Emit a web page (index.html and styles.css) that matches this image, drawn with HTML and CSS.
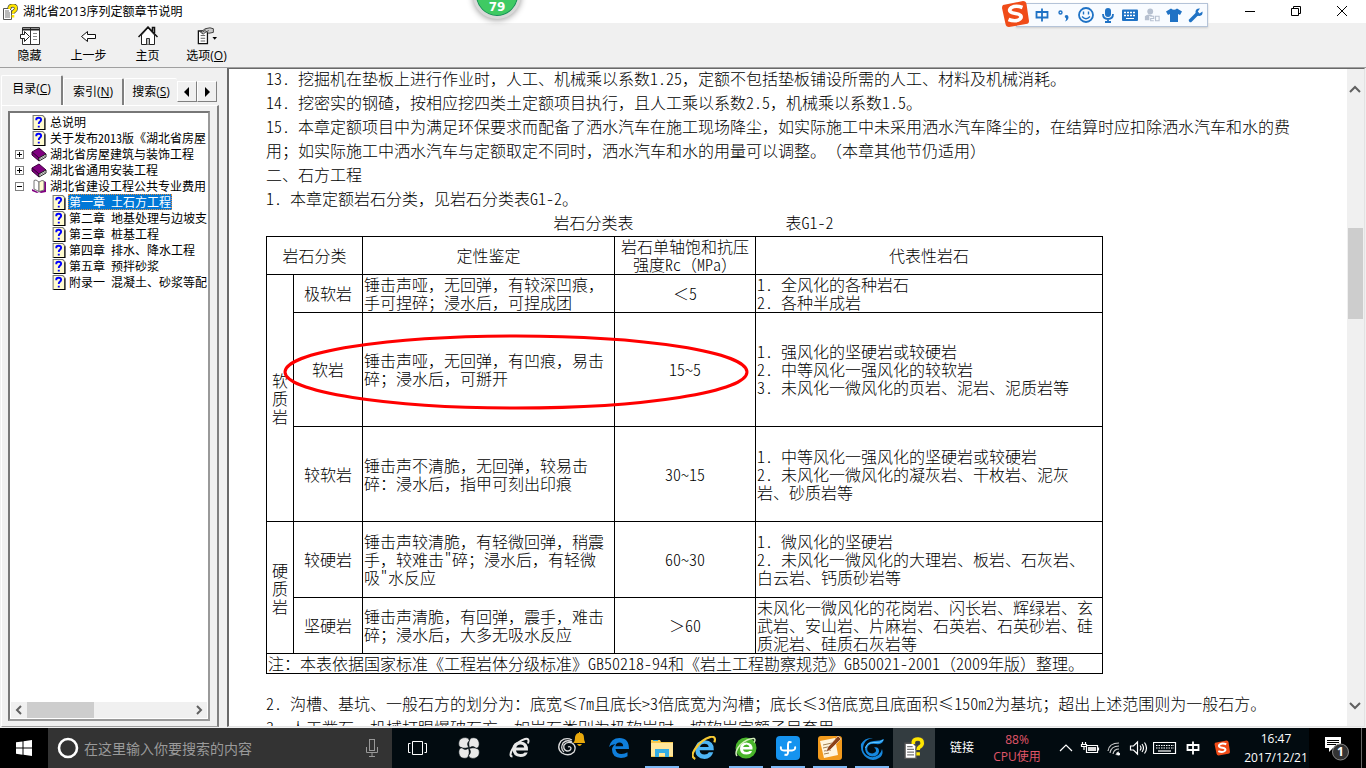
FILE: index.html
```html
<!DOCTYPE html>
<html lang="zh-CN">
<head>
<meta charset="utf-8">
<title>湖北省2013序列定额章节说明</title>
<link rel="stylesheet" href="styles.css">
</head>
<body>
<svg class="defs" aria-hidden="true">
  <symbol id="page" viewBox="0 0 12 14"><path d="M.5.5h9l2 2v11H.5z" fill="#fffbd0" stroke="#777"/><path d="M1 13.5h10.5V3" fill="none" stroke="#000"/><path d="M3.500 5V4q0-1.500 2.200-1.500T8 4.500Q8 5.500 6.700 6.400 5.800 7 5.800 8.300M5.800 10v1.600" fill="none" stroke="#00f" stroke-width="1.800"/></symbol>
  <symbol id="book" viewBox="0 0 16 15"><path d="M1 5 8 1l7 6-7 4z" fill="#800080" stroke="#400040"/><path d="M1 5v3l7 6v-3z" fill="#800080" stroke="#300030"/><path d="m8 11 7-4v3l-7 4z" fill="#fff" stroke="#222"/><path d="m9 12 6-3.500" stroke="#888"/></symbol>
  <symbol id="open" viewBox="0 0 16 15"><path d="M1 3v9l5 2 2-1 2 1 5-1V3l-2-1v9l-4 1-2 1-2-1-4-2z" fill="#800080"/><path d="M3 1.500 5 1l3 2v9.500L3 10z" fill="#fff" stroke="#777"/><path d="m8 3 3-1.500 2 .5v9l-5 1.500z" fill="#fffbd0" stroke="#777"/></symbol>
  <symbol id="help" viewBox="0 0 16 16"><path d="M1.500 4.500h6l2 2v9h-8z" fill="#fff" stroke="#555"/><path d="M3 7h4M3 9h5M3 11h5M3 13h5" stroke="#777"/><path d="M7.500 5V3.500Q8 1.500 11 1.500t3 3Q14 6 12 7.300q-1 .7-1 2.200" fill="none" stroke="#444" stroke-width="4"/><path d="M7.500 5V3.500Q8 1.500 11 1.500t3 3Q14 6 12 7.300q-1 .7-1 2.200M11 11v2.500" fill="none" stroke="#ffe600" stroke-width="2.600"/></symbol>
  <symbol id="sogou" viewBox="0 0 28 28"><path d="m2 5 20-4q3 0 3.500 3L28 21q0 3-3 3L8 27q-3 0-3.500-3L1 8q0-2 1-3z" fill="#f04b18"/><path d="M21.500 7.500Q15 5 10.500 7.500c-4 3-1 5.500 4 6s7 3 4.500 5.500-8 2-11.500.5" fill="none" stroke="#fff" stroke-width="3.600"/></symbol>
  <symbol id="ie" viewBox="0 0 22 22"><path d="M19 13.500H7q.5 3.500 4.500 3.500 3 0 4-1.500h3.200Q17 20 11.500 20q-8-.5-8-8T11.500 4.500q8 .5 7.500 9zM7.200 10.500h8q-.4-3-3.700-3t-4.300 3z"/><path d="M3.500 19.500Q-.5 19 3.500 12 9 4 16 2q5-1 3 4.500" fill="none" stroke="currentColor" stroke-width="2"/></symbol>
</svg>
<div class="desktop">
  <header class="titlebar">
    <svg class="app-icon"><use href="#help"/></svg>
    <h1 class="title">湖北省2013序列定额章节说明</h1>
    <div class="window-buttons">
      <button aria-label="最小化"><svg viewBox="0 0 12 12"><path d="M1 6.500h10"/></svg></button>
      <button aria-label="还原"><svg viewBox="0 0 12 12"><path d="M1.500 3.500h7v7h-7zM3.500 3.500v-2h7v7h-2"/></svg></button>
      <button aria-label="关闭"><svg viewBox="0 0 12 12"><path d="m1 1 10 10M11 1 1 11"/></svg></button>
    </div>
  </header>
  <div class="speed-ball">79</div>
  <div class="ime">
    <svg class="ime-logo"><use href="#sogou"/></svg>
    <button aria-label="中文"><svg viewBox="0 0 16 16"><path d="M2.500 5h11v5.500h-11zM8 1.500v13" class="blue2"/></svg></button>
    <button aria-label="标点"><svg viewBox="0 0 16 16"><circle cx="4.500" cy="5.500" r="1.500" class="blue1"/><path d="M9 8.500q3-1.500 3.500 1.500 0 3-3.500 4.500 1.500-2 1-3.200-2-1-1-2.800z" class="fill"/></svg></button>
    <button aria-label="表情"><svg viewBox="0 0 16 16"><circle cx="8" cy="8" r="7" class="blue2"/><path d="M5.500 4.500v3M10.500 4.500v3M4 9.500q4 4.500 8 0" class="blue1"/></svg></button>
    <button aria-label="语音"><svg viewBox="0 0 16 16"><rect x="5" y="1" width="6" height="9" rx="3" class="fill"/><path d="M3 7q0 5 5 5t5-5M8 12v3M5 15h6" class="blue2"/></svg></button>
    <button aria-label="键盘"><svg viewBox="0 0 16 16"><rect y="2.500" width="16" height="11.500" rx="1" class="fill"/><path d="M2 5.500h12M2 8.500h12" stroke="#fff" stroke-dasharray="2 1" stroke-width="1.300"/><path d="M4 11.500h8" stroke="#fff"/></svg></button>
    <button aria-label="账号"><svg viewBox="0 0 18 16"><circle cx="7" cy="4" r="3.300" fill="#b6c0d0"/><path d="M1 14V9.500Q4 6.500 8 8l2 1H6v5z" fill="#b6c0d0"/><path d="M7 9.500h4V12H7.500v2.500H11M13 9.500h4v5h-4z" fill="none" stroke="#b6c0d0" stroke-width="1.200"/></svg></button>
    <button aria-label="皮肤"><svg viewBox="0 0 16 16"><path d="M5 1.500q3 2.500 6 0l5 3L14 8l-2-1v8H4V7L2 8 0 4.500z" class="fill"/></svg></button>
    <button aria-label="工具"><svg viewBox="0 0 16 16"><path d="M2.500 13.500 9 7" class="blue3"/><path d="M14.500 4.500 11.500 6.500 9.800 4.500 12 1.500Q8 1 7.500 4.500 7.500 9 11.500 9q3.500-.5 3-4.500z" class="fill"/></svg></button>
  </div>
  <nav class="toolbar">
    <button><svg viewBox="0 0 20 20"><path d="M2.500 1.500h17v17h-17z" fill="#fff" stroke="#333"/><path d="M10.500 1v18" stroke="#333"/><path d="M2 3.500h17" stroke="#222" stroke-width="2"/><path d="M13 7.500h4M13 10.500h4M13 13.500h4" stroke="#888"/><path d="M.5 8.500h4v-3l5 5-5 5v-3h-4z" fill="#fff" stroke="#222"/></svg><span>隐藏</span></button>
    <button><svg viewBox="0 0 20 20"><path d="m2.500 10.500 6-5v3h8v4h-8v3z" fill="#fff" stroke="#111"/></svg><span>上一步</span></button>
    <button><svg viewBox="0 0 20 20"><path d="M3.500 9v9.500h13V9L10 2z" fill="#fff" stroke="#222"/><path d="m.5 11 9.500-10 9.500 10M14.500 5V1.500h2V7" fill="none" stroke="#111" stroke-width="1.500"/><path d="M8.500 18.500v-6h3v6" fill="#bbb" stroke="#333"/></svg><span>主页</span></button>
    <button><svg viewBox="0 0 22 20"><path d="M1.500 4.500h10v14h-10z" fill="#fff" stroke="#111" stroke-width="1.400"/><path d="M4 9.500h5M4 12.500h5M4 15.500h5" stroke="#555"/><path d="m4 6 5-4q6-2 9 0v4l-5 1-3-2-3 3z" fill="#ccc" stroke="#333"/><path d="m6 6 4-3M9 6l4-2" stroke="#444"/><path d="M17 11h5l-2.500 3z"/></svg><span>选项(<u>O</u>)</span></button>
  </nav>
  <div class="workspace">
    <aside class="sidebar">
      <div class="tabs" role="tablist">
        <button class="tab selected" role="tab">目录(<u>C</u>)</button>
        <button class="tab" role="tab">索引(<u>N</u>)</button>
        <button class="tab last" role="tab">搜索(<u>S</u>)</button>
        <button class="spin" aria-label="向左"><svg viewBox="0 0 8 10"><path d="M6 0v10L1 5z"/></svg></button>
        <button class="spin" aria-label="向右"><svg viewBox="0 0 8 10"><path d="M2 0v10l5-5z"/></svg></button>
      </div>
      <div class="panel">
        <div class="tree-box">
          <ul class="tree">
            <li><i class="no-toggle"></i><svg><use href="#page"/></svg><span>总说明</span></li>
            <li><i class="no-toggle"></i><svg><use href="#page"/></svg><span>关于发布2013版《湖北省房屋</span></li>
            <li><button class="toggle plus" aria-label="展开"></button><svg><use href="#book"/></svg><span>湖北省房屋建筑与装饰工程</span></li>
            <li><button class="toggle plus" aria-label="展开"></button><svg><use href="#book"/></svg><span>湖北省通用安装工程</span></li>
            <li><button class="toggle" aria-label="折叠"></button><svg><use href="#open"/></svg><span>湖北省建设工程公共专业费用</span></li>
            <li class="child"><svg><use href="#page"/></svg><span class="current">第一章 土石方工程</span></li>
            <li class="child"><svg><use href="#page"/></svg><span>第二章 地基处理与边坡支</span></li>
            <li class="child"><svg><use href="#page"/></svg><span>第三章 桩基工程</span></li>
            <li class="child"><svg><use href="#page"/></svg><span>第四章 排水、降水工程</span></li>
            <li class="child"><svg><use href="#page"/></svg><span>第五章 预拌砂浆</span></li>
            <li class="child"><svg><use href="#page"/></svg><span>附录一 混凝土、砂浆等配</span></li>
          </ul>
          <div class="hscroll">
            <svg class="chev" viewBox="0 0 16 16"><path d="M10 4 6 8l4 4"/></svg>
            <div class="htrack"><div class="hthumb"></div></div>
            <svg class="chev" viewBox="0 0 16 16"><path d="m6 4 4 4-4 4"/></svg>
          </div>
        </div>
      </div>
    </aside>
    <main class="viewer">
      <article class="doc">
        <p><span class="n">13. </span>挖掘机在垫板上进行作业时，人工、机械乘以系数<span class="n">1.25</span>，定额不包括垫板铺设所需的人工、材料及机械消耗。</p>
        <p><span class="n">14. </span>挖密实的钢碴，按相应挖四类土定额项目执行，且人工乘以系数<span class="n">2.5</span>，机械乘以系数<span class="n">1.5</span>。</p>
        <p><span class="n">15. </span>本章定额项目中为满足环保要求而配备了洒水汽车在施工现场降尘，如实际施工中未采用洒水汽车降尘的，在结算时应扣除洒水汽车和水的费用；如实际施工中洒水汽车与定额取定不同时，洒水汽车和水的用量可以调整。（本章其他节仍适用）</p>
        <p>二、石方工程</p>
        <p><span class="n">1. </span>本章定额岩石分类，见岩石分类表<span class="n">G1-2</span>。</p>
        <div class="figure">
          <table class="rocks">
            <caption><div class="caption"><span>岩石分类表</span><span>表<span class="n">G1-2</span></span></div></caption>
            <colgroup><col class="c1"><col class="c2"><col class="c3"><col class="c4"><col class="c5"></colgroup>
            <tr class="r38"><th colspan="2">岩石分类</th><th>定性鉴定</th><th>岩石单轴饱和抗压强度<span class="n">Rc</span>（<span class="n">MPa</span>）</th><th>代表性岩石</th></tr>
            <tr class="r38"><th rowspan="3" class="group">软质岩</th><th>极软岩</th><td>锤击声哑，无回弹，有较深凹痕，手可捏碎；浸水后，可捏成团</td><td class="mid">＜<span class="n">5</span></td><td><span class="n">1. </span>全风化的各种岩石<br><span class="n">2. </span>各种半成岩</td></tr>
            <tr class="r114"><th>软岩</th><td>锤击声哑，无回弹，有凹痕，易击碎；浸水后，可掰开</td><td class="mid"><span class="n">15~5</span></td><td><span class="n">1. </span>强风化的坚硬岩或较硬岩<br><span class="n">2. </span>中等风化一强风化的较软岩<br><span class="n">3. </span>未风化一微风化的页岩、泥岩、泥质岩等</td></tr>
            <tr class="r95"><th>较软岩</th><td>锤击声不清脆，无回弹，较易击碎：浸水后，指甲可刻出印痕</td><td class="mid"><span class="n">30~15</span></td><td><span class="n">1. </span>中等风化一强风化的坚硬岩或较硬岩<br><span class="n">2. </span>未风化一微风化的凝灰岩、干枚岩、泥灰岩、砂质岩等</td></tr>
            <tr class="r76"><th rowspan="2" class="group">硬质岩</th><th>较硬岩</th><td>锤击声较清脆，有轻微回弹，稍震手，较难击<span class="n">"</span>碎；浸水后，有轻微吸<span class="n">"</span>水反应</td><td class="mid"><span class="n">60~30</span></td><td><span class="n">1. </span>微风化的坚硬岩<br><span class="n">2. </span>未风化一微风化的大理岩、板岩、石灰岩、白云岩、钙质砂岩等</td></tr>
            <tr class="r56"><th>坚硬岩</th><td>锤击声清脆，有回弹，震手，难击碎；浸水后，大多无吸水反应</td><td class="mid">＞<span class="n">60</span></td><td>未风化一微风化的花岗岩、闪长岩、辉绿岩、玄武岩、安山岩、片麻岩、石英岩、石英砂岩、硅质泥岩、硅质石灰岩等</td></tr>
            <tr class="r20"><td colspan="5">注：本表依据国家标准《工程岩体分级标准》<span class="n">GB50218-94</span>和《岩土工程勘察规范》<span class="n">GB50021-2001</span>（<span class="n">2009</span>年版）整理。</td></tr>
          </table>
          <svg class="mark" viewBox="0 0 466 76"><ellipse cx="233" cy="38" rx="231" ry="36"/></svg>
        </div>
        <p><span class="n">2. </span>沟槽、基坑、一般石方的划分为：底宽≤<span class="n">7m</span>且底长<span class="n">&gt;3</span>倍底宽为沟槽；底长≤<span class="n">3</span>倍底宽且底面积≤<span class="n">150m2</span>为基坑；超出上述范围则为一般石方。</p>
        <p><span class="n">3. </span>人工凿石、机械打眼爆破石方，如岩石类别为极软岩时，按软岩定额子目套用。</p>
      </article>
      <div class="vscroll">
        <svg class="chev" viewBox="0 0 16 16"><path d="m3 10 5-5 5 5"/></svg>
        <div class="vtrack"><div class="vthumb"></div></div>
        <svg class="chev" viewBox="0 0 16 16"><path d="m3 6 5 5 5-5"/></svg>
      </div>
    </main>
  </div>
  <footer class="taskbar">
    <button class="start" aria-label="开始"><svg viewBox="0 0 16 16"><path d="m0 2.300 6.500-.9v6.200H0zM7.500 1.200 16 0v7.600H7.500zM0 8.500h6.500v6.200L0 13.800zM7.500 8.500H16V16l-8.500-1.200z" fill="#fff"/></svg></button>
    <label class="search">
      <svg class="cortana" viewBox="0 0 22 22"><circle cx="11" cy="11" r="9" fill="none" stroke="#fff" stroke-width="2.600"/></svg>
      <input type="text" placeholder="在这里输入你要搜索的内容" aria-label="搜索">
      <svg class="mic" viewBox="0 0 12 18"><rect x="3.500" y=".5" width="5" height="11"/><path d="M.5 8v5.500h11V8M6 14v3M3 17.500h6"/></svg>
    </label>
    <button class="wide" aria-label="任务视图"><svg viewBox="0 0 22 22" fill="none" stroke="#fff"><path d="M5.500 4.500h10v13h-10zM3.500 6.500h-2v9h2M17.500 6.500h2v9h-2"/></svg></button>
    <button class="wide" aria-label="管家"><svg viewBox="0 0 22 22"><path d="M10.800 10.500Q4 12.500 1 9-.5 2.500 5 .8q5.500-1 6.500 3-3.500 2.500-.7 6.700zM11.500 10.800Q9.500 4.500 13 1q6.500-1.500 8 4 1 5.500-3 6.500-2.500-3.500-6.500-.7zM11.200 11.500q6.800-2 9.800 1.500 1.500 6.500-4 8.200-5.500 1-6.500-3 3.500-2.500.7-6.700zM10.500 11.200q2 6.300-1.500 9.800-6.500 1.500-8-4-1-5.500 3-6.500 2.500 3.500 6.500.7z" fill="#e9e9e9" stroke="#020b10" stroke-width=".6"/></svg></button>
    <button class="wide" aria-label="浏览器"><svg class="pale"><use href="#ie"/></svg></button>
    <button class="wide" aria-label="通知助手"><svg class="bell-app" viewBox="0 0 28 26"><path d="M15 8Q9 5 4 9q-5 7 1 12 7 4 12-1 3-6-2-9-5-2-8 2-1 5 3 6 4 0 4-3-1-2-3-1M15 10q-5-3-9 1-3 6 1 9" fill="none" stroke="#ddd" stroke-width="1.300"/><path d="M16 11q2-1 2-6 1-4 4-4V0h1v1q4 0 4 5 0 4 2 5zM20 12h5q-2.500 4-5 0z" fill="#e8a90c"/></svg></button>
    <button class="edge" aria-label="Edge"><svg viewBox="0 0 22 22"><path d="M1 10Q3 1 11.500 1 21 1 21 12H7.500q.5 5 6 5 3.500 0 6-1.700v4Q17 21 13 21q-9-.5-9-8.500 0-3 3.500-5.500Q3 7.500 1 10zm6.500-.8h7.700Q15 5.500 11.500 5.500q-3.500 0-4 3.700z" fill="#0f7edb"/></svg></button>
    <button class="task running" aria-label="文件资源管理器"><svg viewBox="0 0 22 22"><path d="M0 3h9l1 2h12v15H0z" fill="#f6c84c"/><path d="M0 6h22v13H0z" fill="#ffe69a"/><path d="M2 3h5v1H2z" fill="#1a9fe0"/><path d="M4 20v-8h14v8h-4v-4H8v4z" fill="#35ade3"/></svg></button>
    <button class="task" aria-label="Internet Explorer"><svg class="big" viewBox="0 0 22 22"><path d="M20 13H7q.5 4 4.500 4 3 0 4-2h4Q17.500 21 11.500 21q-8.500-.5-8.500-8.500T11.500 4q9 .5 8.500 9zM7.300 10h8q-.5-3-3.800-3t-4.200 3z" fill="#4eb5f4"/><path d="M3 21Q-2 19 3 11.500 9 3 17 .8q5.500-.8 3.500 5" fill="none" stroke="#f6c934" stroke-width="2"/></svg></button>
    <button class="task running" aria-label="360浏览器"><svg viewBox="0 0 22 22"><circle cx="11" cy="11" r="10.500" fill="#49b52b"/><path d="M17.500 12.500H8q.5 2.500 3.500 2.500 2 0 3-1h2.500q-1 3.500-5.500 3.500-6.500 0-6.500-6t6.500-6q6.500.5 6 7zM8 10h6.500q-.5-2.500-3-2.500T8 10z" fill="#fff"/><path d="M2 19Q-1 15 5.500 7.500 13 1 19 1.500q2 1 0 4" fill="none" stroke="#d4f1bc" stroke-width="1.500"/></svg></button>
    <button class="task running" aria-label="应用"><svg class="big" viewBox="0 0 24 24"><rect width="24" height="24" rx="4" fill="#1593ef"/><path d="M15.500 6.500Q12 4.500 12 9v7q0 4-3.500 2.500M5 10.500q-1 4 3 4h8q4-.5 3-4" fill="none" stroke="#fff" stroke-width="2"/></svg></button>
    <button class="task running" aria-label="记事"><svg class="big" viewBox="0 0 24 24"><rect width="24" height="24" rx="3" fill="#f29a1d"/><path d="M2 5 17 2l3 17-14 3z" fill="#fff5df"/><path d="m5 9 9-2M5 12l9-2M6 15l7-1M6 18l5-1" stroke="#a28255"/><path d="m8 16 2-5L20 0l3 3-11 11z" fill="#8b421b" stroke="#fff" stroke-width=".5"/></svg></button>
    <button class="task running" aria-label="广联达"><svg class="big" viewBox="0 0 24 24"><path d="M24 3q-1 6-8 5-6-1-8 2-2 4 1 6.500 4 2 6.500-.5 1.500-3-1.500-4.500 5-1 5 4-1 5-7 5-6-.5-7-7.500 1-7.500 9-8 6 0 10-2zM1 8Q5 1 13 2 6 3 4 8q-3 7 3 11.500 6 3.500 11.500-.5 3-3 3.500-6 2 6-3 9-6 4-12 0Q0 17 1 8z" fill="#1688df"/><path d="M23 4q-2 3-8 2.500Q7 6 5.500 12" fill="none" stroke="#65c8ff"/></svg></button>
    <button class="task active" aria-label="帮助"><svg><use href="#help"/></svg></button>
    <div class="tray">
      <span class="links">链接</span>
      <div class="cpu"><span>88%</span><span>CPU使用</span></div>
      <div class="tray-icons">
        <svg viewBox="0 0 20 16"><path d="m4 11 6-6 6 6"/></svg>
        <svg viewBox="0 0 20 16"><path d="M6.500 5.500h11v7h-11zM18.500 7.500v3M2.500 2v2M5.500 2v2M1.500 4.500h5v2h-5zM4 7v3"/><path d="M8 7h8v4H8z" fill="#ddd" stroke="none"/></svg>
        <svg viewBox="0 0 20 16"><path d="M4 11q1-8 11-8M6 13q1-7 9-7M9 14q1-5 6-5M12 15q1-3 3-3" stroke="#ccc"/><circle cx="14.500" cy="14" r="1" fill="#fff"/></svg>
        <svg viewBox="0 0 20 16"><path d="M2.500 6v4h3l4 4V2l-4 4zM12 5.500q2 2.500 0 5M14 4q3 4 0 8M16.500 2.500q4 5.500 0 11"/></svg>
        <svg class="kbd" viewBox="0 0 24 16"><path d="M.5 2.500h22v11H.5z"/><path d="M3 5.500h18M3 8h18" stroke-dasharray="1.500 1"/><path d="M5 11h13"/></svg>
        <svg viewBox="0 0 20 16"><path d="M4.500 5h11v5h-11zM10 1.500v13" stroke-width="1.800"/></svg>
        <svg class="tray-s"><use href="#sogou"/></svg>
      </div>
      <div class="clock"><time>16:47</time><time>2017/12/21</time></div>
      <button class="notify" aria-label="通知"><svg viewBox="0 0 26 26"><path d="M1 2h16v11H9l-4 4v-4H1z" fill="#fff"/><path d="M3 5.500h12M3 7.500h12M3 9.500h9" stroke="#000"/><circle cx="16.500" cy="17" r="8" fill="#333" stroke="#888"/></svg><b>1</b></button>
      <span class="peek"></span>
    </div>
  </footer>
</div>
</body>
</html>
```
FILE: styles.css
```css
* { box-sizing: border-box; }
body { margin: 0; font: 12px/16px "Open Sans", "Noto Sans CJK SC", sans-serif; color: #000; }
button { margin: 0; padding: 0; border: 0; background: none; font: inherit; color: inherit; }
svg { display: block; flex: none; }
.defs { position: absolute; width: 0; height: 0; }
.desktop { position: relative; height: 100vh; display: flex; flex-direction: column; overflow: hidden; background: #f0f0f0; }

.titlebar { height: 23px; flex: none; display: flex; align-items: center; background: #fff; }
.app-icon { width: 16px; height: 16px; margin: 0 5px 0 2px; }
.title { margin: 0; font-size: 12px; font-weight: 400; flex: 1; }
.window-buttons { display: flex; height: 21px; align-self: flex-start; padding-right: 1px; }
.window-buttons button { width: 46px; display: grid; place-items: center; }
.window-buttons svg { width: 12px; height: 12px; fill: none; stroke: #000; }
.speed-ball { position: absolute; left: 473px; top: -29px; width: 48px; height: 48px; border: 3px solid #d8d8d8; border-radius: 50%; background: #3fca63; box-shadow: inset 0 0 0 1px #168a5a, 0 1px 6px #999; color: #fff; font: bold 12px/16px "DejaVu Sans", sans-serif; text-align: center; padding-top: 25px; }
.ime { position: absolute; right: 158px; top: 3px; height: 24px; width: 192px; border: 1px solid #b4c3d8; background: #f8fbff; box-shadow: 0 1px 2px #ccc; display: flex; align-items: center; padding-left: 14px; }
.ime-logo { position: absolute; left: -16px; top: -4px; width: 28px; height: 28px; }
.ime button { width: 22px; flex: none; display: grid; place-items: center; }
.ime button svg { width: 16px; height: 16px; }
.fill { fill: #1f72c5; }
.blue1, .blue2, .blue3 { fill: none; stroke: #1f72c5; stroke-width: 1.4; }
.blue2 { stroke-width: 1.8; }
.blue3 { stroke-width: 3.4; stroke-linecap: round; }

.toolbar { height: 45px; flex: none; display: flex; border-bottom: 1px solid #a0a0a0; }
.toolbar button { width: 59px; display: flex; flex-direction: column; align-items: center; gap: 2px; padding-top: 3px; }
.toolbar svg { width: 20px; height: 20px; }

.workspace { flex: 1; min-height: 0; display: flex; }
.sidebar { width: 219px; flex: none; display: flex; flex-direction: column; padding: 7px 0 1px 1px; }
.tabs { display: flex; align-items: flex-end; height: 30px; }
.tab { height: 27px; width: 61px; border-top: 1px solid #fff; border-left: 1px solid #fff; border-right: 2px solid #808080; border-radius: 2px 2px 0 0; }
.tab.selected { height: 30px; width: 62px; padding-bottom: 4px; }
.tab.last { width: 53px; border-right: 0; }
.spin { width: 20px; height: 21px; margin-bottom: 3px; display: grid; place-items: center; border: 1px solid #fff; border-right-color: #808080; border-bottom-color: #808080; }
.spin svg { width: 8px; height: 10px; }
.panel { flex: 1; min-height: 0; display: flex; border-top: 1px solid #fff; border-left: 1px solid #fff; border-right: 2px solid #808080; border-bottom: 1px solid #a0a0a0; padding: 5px 7px 5px 6px; }
.tree-box { flex: 1; min-width: 0; display: flex; flex-direction: column; background: #fff; border: 2px solid #777; border-right-color: #999; border-bottom-color: #999; padding: 1px; }
.tree { list-style: none; margin: 0; padding: 0 0 0 4px; flex: 1; overflow: hidden; font-family: "Noto Sans CJK SC", sans-serif; font-feature-settings: "hwid"; text-spacing-trim: space-all; }
.tree li { display: flex; align-items: center; height: 16px; white-space: nowrap; }
.tree svg { width: 16px; height: 15px; margin-right: 3px; }
.tree .child { padding-left: 36px; }
.tree .child svg { margin-right: 1px; }
.tree .child span { padding: 0 1px; height: 16px; }
.tree .current { background: #0078d7; color: #fff; outline: 1px dotted #e08a3c; outline-offset: -1px; }
.no-toggle, .toggle { width: 9px; height: 9px; margin-right: 7px; flex: none; }
.toggle { border: 1px solid #808080; background: linear-gradient(#000, #000) center / 5px 1px no-repeat; }
.toggle.plus { background: linear-gradient(#000, #000) center / 5px 1px no-repeat, linear-gradient(#000, #000) center / 1px 5px no-repeat; }
.hscroll { height: 16px; display: flex; align-items: stretch; background: #f0f0f0; }
.chev { width: 16px; height: 16px; fill: none; stroke: #606060; stroke-width: 2; }
.htrack { flex: 1; }
.hthumb { width: 41%; height: 100%; background: #cdcdcd; }

.viewer { flex: 1; min-width: 0; display: flex; margin: 0 1px 1px 8px; border: 1px solid #696969; border-left-width: 2px; border-right-color: #e3e3e3; border-bottom-color: #e3e3e3; background: #fff; }
.doc { flex: 1; min-width: 0; overflow: hidden; margin: 0; padding: 0 48px 0 37px; font: 300 16px/24px "Noto Sans CJK SC", sans-serif; text-spacing-trim: space-all; }
.n { font-feature-settings: "hwid"; }
.doc p { margin: 0; }
.doc p:first-child { margin-top: -3px; }
.figure { position: relative; margin-bottom: 17px; }
.rocks { width: 837px; table-layout: fixed; border-collapse: collapse; line-height: 18px; }
.caption { display: flex; justify-content: center; gap: 152px; padding: 0 0 2px 18px; line-height: 24px; }
.rocks th, .rocks td { border: 1px solid #000; padding: 0 1px 1px; font-weight: inherit; text-align: left; vertical-align: middle; }
.rocks th, .rocks .mid { text-align: center; }
.rocks .group { padding: 0 4px; }
.c1 { width: 27px; } .c2 { width: 69px; } .c3 { width: 252px; } .c4 { width: 141px; }
.r20 { height: 20px; } .r38 { height: 38px; } .r56 { height: 56px; } .r76 { height: 76px; } .r95 { height: 95px; } .r114 { height: 114px; }
.mark { position: absolute; left: 17px; top: 124px; width: 466px; height: 76px; fill: none; stroke: #f00; stroke-width: 3; }
.vscroll { width: 17px; flex: none; display: flex; flex-direction: column; background: #f0f0f0; padding: 13px 0; }
.vtrack { flex: 1; padding-top: 130px; }
.vthumb { height: 91px; margin: 0 1px; background: #cdcdcd; }

.taskbar { height: 40px; flex: none; display: flex; background: #020b10; color: #fff; }
.taskbar button { display: grid; place-items: center; flex: none; }
.taskbar button svg { width: 22px; height: 22px; }
.taskbar .start { width: 48px; background: #000; }
.taskbar .start svg { width: 16px; height: 16px; }
.search { width: 344px; display: flex; align-items: center; background: #333; padding: 0 14px 0 9px; }
.cortana { width: 22px; height: 22px; margin-right: 5px; }
.search input { flex: 1; min-width: 0; padding: 0; border: 0; background: none; color: #fff; font: 14px/20px "Noto Sans CJK SC", sans-serif; }
.search input::placeholder { color: #9a9a9a; opacity: 1; }
.mic { width: 12px; height: 18px; fill: none; stroke: #999; }
.taskbar .wide { width: 51px; }
.taskbar .edge { width: 45px; }
.taskbar .task { width: 42px; }
.taskbar .running { background: linear-gradient(#7db8f5, #7db8f5) center bottom / 34px 2px no-repeat; }
.taskbar .active { background: #333c40; }
.taskbar .bell-app { width: 28px; height: 26px; margin-bottom: 6px; }
.taskbar .big { width: 24px; height: 24px; }
.pale { fill: #e9e9e9; color: #e9e9e9; }
.tray { flex: 1; display: flex; align-items: center; justify-content: flex-end; }
.links { margin-right: 18px; }
.cpu { width: 50px; display: flex; flex-direction: column; align-items: center; color: #e0566a; line-height: 17px; margin-right: 14px; white-space: nowrap; }
.tray-icons { display: flex; align-items: center; gap: 4px; }
.tray-icons svg { width: 20px; height: 16px; fill: none; stroke: #fff; stroke-width: 1.2; }
.tray-icons .kbd { width: 24px; margin: 0 2px 0 1px; }
.tray-icons .tray-s { width: 16px; stroke: none; margin: 0 0 0 7px; }
.clock { width: 66px; margin-left: 13px; display: flex; flex-direction: column; align-items: center; line-height: 19px; }
.taskbar .notify { position: relative; width: 52px; height: 40px; background: #000; padding-left: 4px; }
.taskbar .notify svg { width: 26px; height: 26px; }
.notify b { position: absolute; left: 28px; top: 16px; width: 7px; font-size: 12px; }
.peek { width: 5px; height: 40px; border-left: 1px solid #666; background: #000; }
```
